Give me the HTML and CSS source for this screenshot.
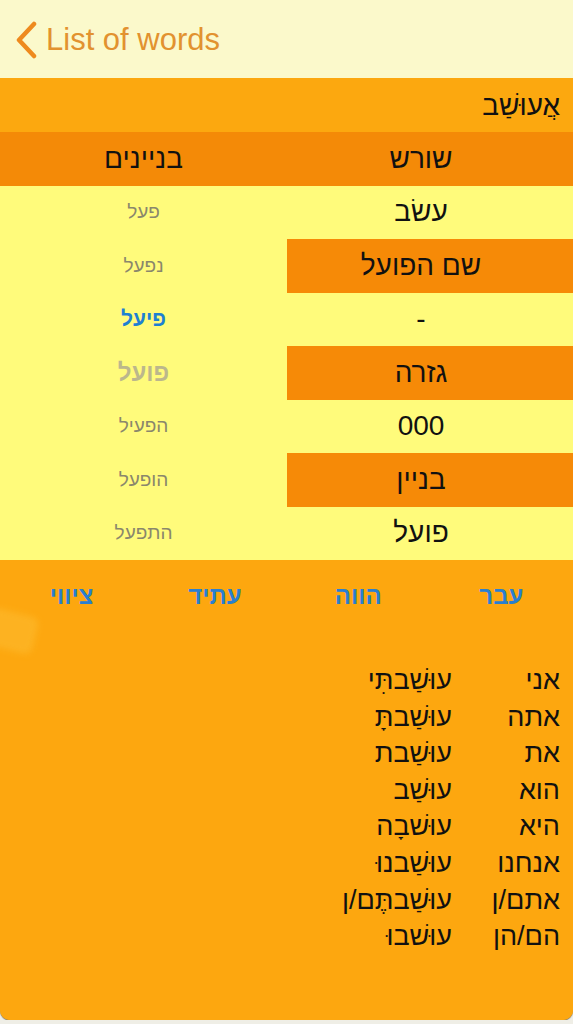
FILE: index.html
```html
<!DOCTYPE html>
<html lang="he">
<head>
<meta charset="utf-8">
<title>אֲעוּשַׁב</title>
<link rel="stylesheet" href="styles.css">
</head>
<body>
<div class="app">
  <header class="nav">
    <svg class="chev" width="24" height="38" viewBox="0 0 24 38"><path d="M20 3 L5 19 L20 35" fill="none" stroke="#ee8a1e" stroke-width="4.5" stroke-linecap="round" stroke-linejoin="round"/></svg>
    <span class="back">List of words</span>
  </header>
  <div class="word" dir="rtl">אֲעוּשַׁב</div>
  <div class="table" dir="rtl">
    <div class="cell head main">שורש</div>
    <div class="cell head">בניינים</div>

    <div class="cell main">עשׂב</div>
    <div class="cell side">פעל</div>

    <div class="cell main hl">שם הפועל</div>
    <div class="cell side">נפעל</div>

    <div class="cell main">-</div>
    <div class="cell side active">פיעל</div>

    <div class="cell main hl">גזרה</div>
    <div class="cell side off">פועל</div>

    <div class="cell main">000</div>
    <div class="cell side">הפעיל</div>

    <div class="cell main hl">בניין</div>
    <div class="cell side">הופעל</div>

    <div class="cell main">פועל</div>
    <div class="cell side">התפעל</div>
  </div>
  <section class="conj">
    <div class="glow"></div>
    <nav class="tabs" dir="rtl">
      <span>עבר</span>
      <span>הווה</span>
      <span>עתיד</span>
      <span>ציווי</span>
    </nav>
    <div class="forms" dir="rtl">
      <span>אני</span><span>עוּשַׁבתִּי</span>
      <span>אתה</span><span>עוּשַׁבתָּ</span>
      <span>את</span><span>עוּשַׁבת</span>
      <span>הוא</span><span>עוּשַׁב</span>
      <span>היא</span><span>עוּשׁבָה</span>
      <span>אנחנו</span><span>עוּשַׁבנוּ</span>
      <span>אתם/ן</span><span>עוּשַׁבתֶּם/ן</span>
      <span>הם/הן</span><span>עוּשׁבוּ</span>
    </div>
  </section>
</div>
</body>
</html>
```
FILE: styles.css
```css
html, body {
  margin: 0;
  padding: 0;
  background: #efeee6;
}
body {
  font-family: "Liberation Sans", "DejaVu Sans", Arial, sans-serif;
  color: #111;
}
.app {
  width: 573px;
  height: 1020px;
  display: flex;
  flex-direction: column;
  border-radius: 0 0 10px 10px;
  overflow: hidden;
  box-shadow: 0 1px 1px rgba(60, 50, 20, 0.6);
  background: #fda70f;
}
.nav {
  height: 78px;
  flex: none;
  display: flex;
  align-items: center;
  padding-left: 14px;
  background: #fbf9cb;
  box-sizing: border-box;
  padding-top: 2px;
}
.chev {
  display: block;
}
.back {
  margin-left: 8px;
  font-size: 31px;
  color: #e2922f;
}
.word {
  height: 54px;
  flex: none;
  display: flex;
  align-items: center;
  padding-right: 13px;
  background: #fca80f;
  font-size: 28px;
  box-sizing: border-box;
  padding-top: 2px;
}
.table {
  display: grid;
  grid-template-columns: 286px 287px;
  grid-template-rows: repeat(8, 53.5px);
  background: #fffb7b;
  flex: none;
}
.cell {
  display: flex;
  align-items: center;
  justify-content: center;
}
.head {
  background: #f48a07;
  font-size: 28px;
}
.main {
  font-size: 28px;
  padding-right: 18px;
}
.hl {
  background: #f68a07;
}
.side {
  font-size: 19px;
  color: #8a876c;
}
.side.active {
  color: #1e80d2;
  font-size: 21px;
  font-weight: bold;
}
.side.off {
  color: #bcb78c;
  font-size: 24px;
  font-weight: bold;
}
.conj {
  position: relative;
  flex: 1;
  background: #fda70f;
}
.glow {
  position: absolute;
  left: -14px;
  top: 52px;
  width: 50px;
  height: 38px;
  border-radius: 8px;
  background: #fdb82a;
  transform: rotate(14deg);
  filter: blur(3px);
  opacity: 0.7;
}
.tabs {
  position: relative;
  display: grid;
  grid-template-columns: repeat(4, 1fr);
  height: 72px;
  align-items: center;
  justify-items: center;
  font-size: 24px;
  font-weight: bold;
  color: #2a7fcf;
}
.forms {
  display: grid;
  grid-template-columns: 108px auto;
  justify-content: start;
  padding: 30px 13px 0 0;
  font-size: 27px;
  line-height: 36.6px;
}
```
